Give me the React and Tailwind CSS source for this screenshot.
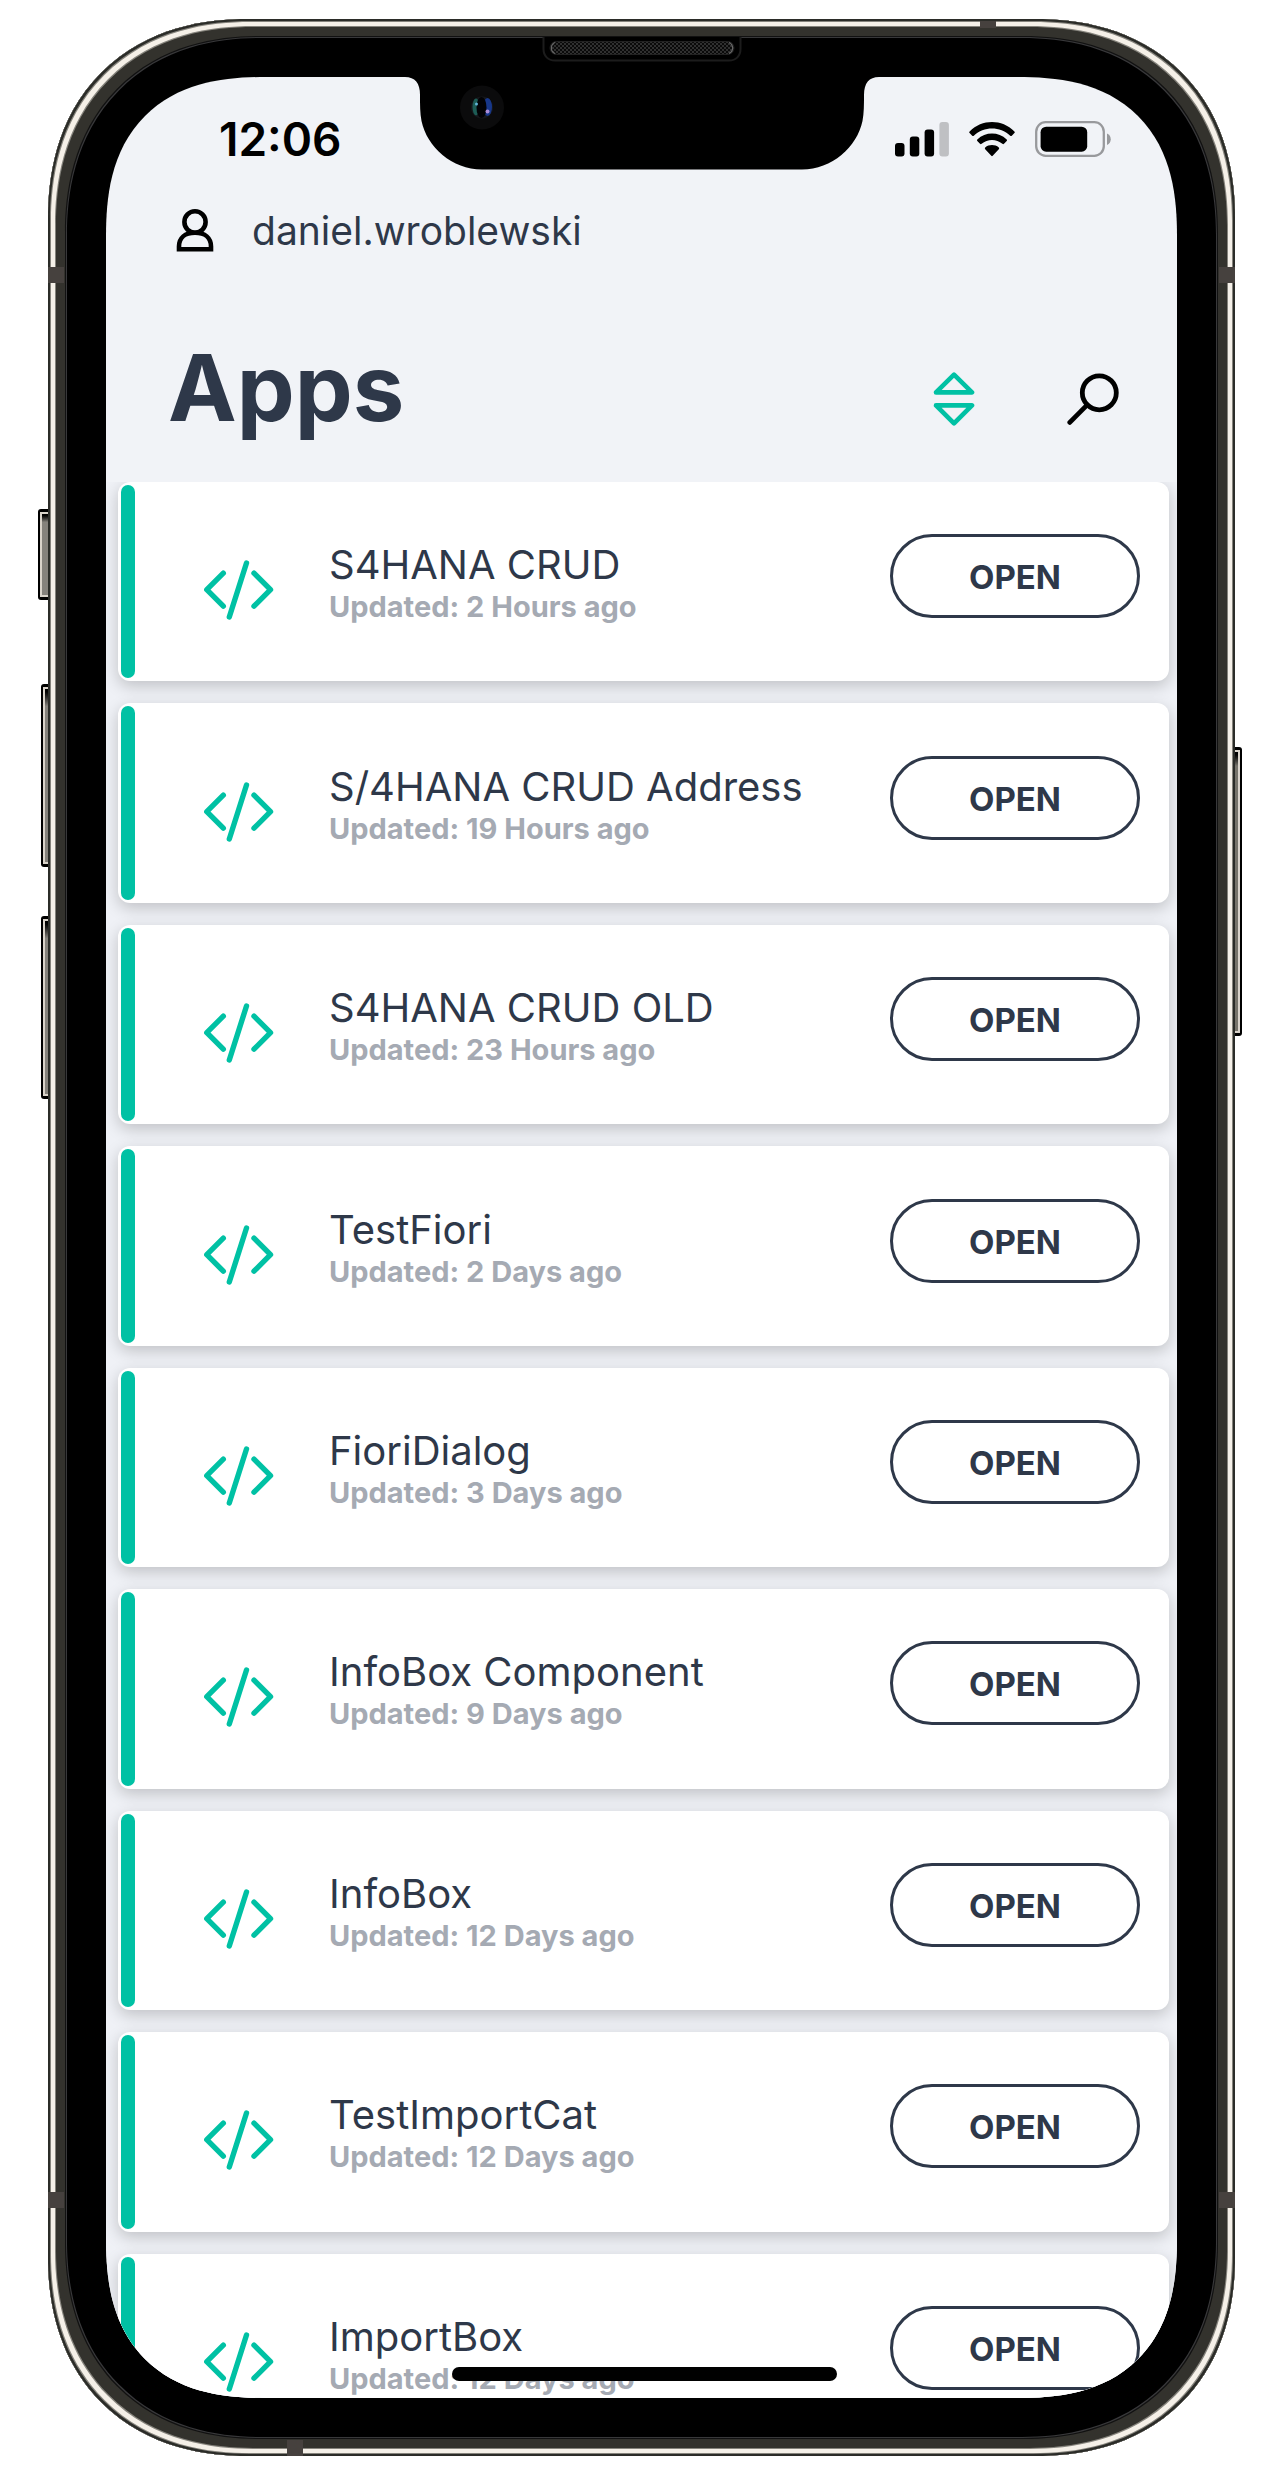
const apps = [
  { name: "S4HANA CRUD", updated: "2 Hours ago" },
  { name: "S/4HANA CRUD Address", updated: "19 Hours ago" },
  { name: "S4HANA CRUD OLD", updated: "23 Hours ago" },
  { name: "TestFiori", updated: "2 Days ago" },
  { name: "FioriDialog", updated: "3 Days ago" },
  { name: "InfoBox Component", updated: "9 Days ago" },
  { name: "InfoBox", updated: "12 Days ago" },
  { name: "TestImportCat", updated: "12 Days ago" },
  { name: "ImportBox", updated: "12 Days ago" },
];

function SignalIcon() {
  return (
    <svg width="54" height="36" viewBox="0 0 54 36" aria-label="Signal" role="img">
      <rect x="0" y="22" width="9.5" height="13.5" rx="3" />
      <rect x="14.8" y="15.5" width="9.5" height="20" rx="3" />
      <rect x="29.6" y="8.5" width="9.5" height="27" rx="3" />
      <rect x="44.4" y="1" width="9.5" height="34.5" rx="3" fill="#bfc0c3" />
    </svg>
  );
}

function WifiIcon() {
  return (
    <svg width="46" height="36" viewBox="0 0 46 36" aria-label="Wi-Fi" role="img">
      <path d="M0.6 10.4 C13 -2.1 33 -2.1 45.4 10.4 Q46.2 11.3 45.4 12.1 L42.8 14.7 Q42 15.4 41.2 14.7 C31 5.2 15 5.2 4.8 14.7 Q4 15.4 3.2 14.7 L0.6 12.1 Q-0.2 11.3 0.6 10.4 Z" />
      <path d="M8.3 18.4 C16.6 10.6 29.4 10.6 37.7 18.4 Q38.5 19.3 37.7 20.1 L35 22.8 Q34.2 23.5 33.4 22.8 C27.4 17.6 18.6 17.6 12.6 22.8 Q11.8 23.5 11 22.8 L8.3 20.1 Q7.5 19.3 8.3 18.4 Z" />
      <path d="M16.2 26.5 C20 23.3 26 23.3 29.8 26.5 Q30.6 27.4 29.8 28.2 L23.7 34.8 Q23 35.5 22.3 34.8 L16.2 28.2 Q15.4 27.4 16.2 26.5 Z" />
    </svg>
  );
}

function BatteryIcon() {
  return (
    <svg width="76" height="36" viewBox="0 0 76 36" aria-label="Battery" role="img">
      <rect x="1.2" y="1.2" width="67.6" height="33.6" rx="9.5" fill="none" stroke="#98999c" strokeWidth="2.3" />
      <rect x="5.6" y="5.7" width="46.6" height="25" rx="5.5" />
      <path d="M72 12.5 C77 14.5 77 22 72 24 Z" fill="#98999c" />
    </svg>
  );
}

function UserIcon() {
  return (
    <svg width="38" height="44" viewBox="0 0 38 44" fill="none" stroke="#000" strokeWidth="4.6" aria-hidden="true">
      <ellipse cx="19" cy="13" rx="10.6" ry="10.7" />
      <path d="M3 40.3 V37.5 C3 29 9 23.8 19 23.8 C29 23.8 35 29 35 37.5 V40.3 Z" />
    </svg>
  );
}

function SortIcon() {
  return (
    <svg width="42" height="54" viewBox="0 0 42 54" fill="none" stroke="#00c1a4" strokeWidth="4.6" strokeLinejoin="round" aria-hidden="true">
      <path d="M21 2.6 L39 20.4 H3 Z" />
      <path d="M21 51.4 L39 33.4 H3 Z" />
    </svg>
  );
}

function SearchIcon() {
  return (
    <svg width="53" height="53" viewBox="0 0 53 53" fill="none" stroke="#000" strokeWidth="4.8" strokeLinecap="round" aria-hidden="true">
      <circle cx="32.3" cy="19.8" r="17" />
      <path d="M20.2 31.9 L2.8 49.4" />
    </svg>
  );
}

function CodeIcon() {
  return (
    <svg width="70" height="60" viewBox="0 0 70 60" fill="none" stroke="#00c1a4" strokeWidth="5.4" strokeLinecap="round" strokeLinejoin="round" aria-hidden="true">
      <path d="M19.3 13.2 L2.8 29.7 L19.3 46.2" />
      <path d="M50 13.2 L66.5 29.7 L50 46.2" />
      <path d="M42.5 3 L25.3 57" />
    </svg>
  );
}

function Notch() {
  return (
    <div className="absolute inset-x-0 top-0 flex justify-center">
      <svg width="474" height="93" viewBox="0 0 474 93" aria-hidden="true">
        <path d="M0 0 H474 C464 0 459 6 459 18 C459 28 459 36 457.500 44 C452 70 427 92.500 397 92.500 H77 C47 92.500 22 70 16.500 44 C15 36 15 28 15 18 C15 6 10 0 0 0 Z" />
        <circle cx="77" cy="30.500" r="22" fill="#0b0b0c" />
        <circle cx="77" cy="30.500" r="11" fill="#15171b" />
        <ellipse cx="71" cy="30" rx="3.500" ry="8.500" fill="#1d5c55" />
        <ellipse cx="82.500" cy="30" rx="4.500" ry="9" fill="#17378a" />
        <ellipse cx="76.500" cy="30.500" rx="5" ry="10.500" fill="#020205" />
        <circle cx="71.500" cy="27" r="1.500" fill="#5fb3d6" />
        <circle cx="82.500" cy="34.500" r="2" fill="#a98bd8" />
      </svg>
    </div>
  );
}

function Speaker() {
  return (
    <div className="absolute inset-x-0 top-[18px] flex justify-center">
      <svg width="200" height="26" viewBox="0 0 200 26" aria-hidden="true">
        <defs>
          <pattern id="mesh" width="4" height="4" patternUnits="userSpaceOnUse">
            <rect width="4" height="4" fill="#0a0a0a" />
            <rect width="2" height="2" fill="#303030" />
            <rect x="2" y="2" width="2" height="2" fill="#303030" />
          </pattern>
        </defs>
        <path d="M1.500 0 V12 C1.500 19 6 23.500 13 23.500 H187 C194 23.500 198.500 19 198.500 12 V0" fill="#000" stroke="#1c1c1c" strokeWidth="2" />
        <rect x="8" y="4.500" width="184" height="13" rx="6.500" fill="url(#mesh)" stroke="#222" strokeWidth="1" />
        <path d="M13 5.500 A6 6 0 0 0 13 16.500 M187 5.500 A6 6 0 0 1 187 16.500" fill="none" stroke="#666" strokeWidth="1.200" />
      </svg>
    </div>
  );
}

function AppCard({ app }) {
  return (
    <li className="relative flex items-center rounded-[12px] bg-white pr-[29px] pl-[86px] shadow-[0_5px_16px_rgba(0,0,0,0.2)]">
      <span className="absolute inset-y-[3px] left-[3px] w-[14px] rounded-full bg-[#00c1a4]" />
      <span className="pt-[17px]">
        <CodeIcon />
      </span>
      <div className="ml-[55px] min-w-0 flex-1 pt-[5px]">
        <h2 className="text-[40px] leading-[46px] whitespace-nowrap text-[#2e3849]">{app.name}</h2>
        <p className="text-[29px] leading-[38px] font-bold whitespace-nowrap text-[#a5aab3]">Updated: {app.updated}</p>
      </div>
      <button
        type="button"
        aria-label={`Open ${app.name}`}
        className="mb-[11px] h-[84px] w-[250px] rounded-full border-3 border-[#2e3849] pt-[2px] text-[33px] leading-[40px] font-bold text-[#2e3849]"
      >
        OPEN
      </button>
    </li>
  );
}

function LeftKey({ className }) {
  return (
    <span className={`absolute flex rounded-l-[3px] bg-black py-[3px] pl-[2px] ${className}`}>
      <span className="flex-1 border-y-2 border-l-2 border-[#d9d3ca] bg-linear-to-b from-black via-[#85827c] via-10% to-[#85827c]" />
    </span>
  );
}

function RightKey({ className }) {
  return (
    <span className={`absolute flex rounded-r-[3px] bg-black py-[3px] pr-[2px] ${className}`}>
      <span className="flex-1 border-y-2 border-r-2 border-[#d9d3ca] bg-linear-to-b from-black via-[#77746b] via-5% to-[#77746b]" />
    </span>
  );
}

function Band({ className }) {
  return <span className={`absolute bg-[#46413e] ${className}`} />;
}

export default function App() {
  return (
    <main className="bg-white px-12 py-[19px] font-['Inter',sans-serif]">
      <div className="relative">
        <LeftKey className="top-[490px] -left-[10px] h-[91px] w-[16px]" />
        <LeftKey className="top-[665px] -left-[7px] h-[183px] w-[14px]" />
        <LeftKey className="top-[897px] -left-[7px] h-[183px] w-[14px]" />
        <RightKey className="top-[728px] -right-[7px] h-[289px] w-[14px]" />

        <div className="relative rounded-[200px] bg-black p-[58px] [corner-shape:superellipse(1.155)] shadow-[inset_0_0_0_2px_#2b2c28,inset_0_0_0_3px_#85837c,inset_0_0_0_7px_#f5f0e8,inset_0_0_0_8px_#85837c,inset_0_0_0_17px_#33322d,inset_0_0_0_18px_#111,inset_0_0_0_19px_#38383a]">
          <Band className="top-[248px] left-0 h-4 w-4" />
          <Band className="bottom-[248px] left-0 h-4 w-4" />
          <Band className="top-[248px] right-0 h-4 w-4" />
          <Band className="right-0 bottom-[248px] h-4 w-4" />
          <Band className="top-[2px] right-[239px] h-[7px] w-4" />
          <Band className="bottom-0 left-[239px] h-4 w-4" />
          <Speaker />

          <div className="relative overflow-hidden rounded-[160px] bg-[#f1f3f7] [corner-shape:superellipse(1.31)]">
            <Notch />

            <header>
              <div className="flex items-center justify-between pt-[34px] pr-[66px] pl-[113px]">
                <time className="text-[46px] leading-[56px] font-semibold text-black">12:06</time>
                <div className="flex items-center gap-5">
                  <SignalIcon />
                  <WifiIcon />
                  <BatteryIcon />
                </div>
              </div>
              <div className="mt-[36px] flex items-center gap-[38px] pl-[70px]">
                <UserIcon />
                <span className="text-[39px] leading-[56px] text-[#2e3849]">daniel.wroblewski</span>
              </div>
              <div className="mt-[73px] flex items-center justify-between pr-[57px] pl-[62px]">
                <h1 className="text-[92px] leading-[112px] font-bold text-[#2e3849]">Apps</h1>
                <div className="flex gap-[92px] pt-[22px]">
                  <button type="button" aria-label="Sort">
                    <SortIcon />
                  </button>
                  <button type="button" aria-label="Search">
                    <SearchIcon />
                  </button>
                </div>
              </div>
            </header>

            <div className="mt-[38px] -mb-[55px] overflow-hidden bg-[#eff1f6] pr-2 pl-3">
              <ul className="grid h-[1971px] auto-rows-fr gap-[22px]">
                {apps.map((app) => (
                  <AppCard key={app.name} app={app} />
                ))}
              </ul>
            </div>

            <div className="absolute inset-x-0 bottom-[17px] flex justify-center pl-[6px]">
              <span className="h-[14px] w-[385px] rounded-full bg-black" />
            </div>
          </div>
        </div>
      </div>
    </main>
  );
}
